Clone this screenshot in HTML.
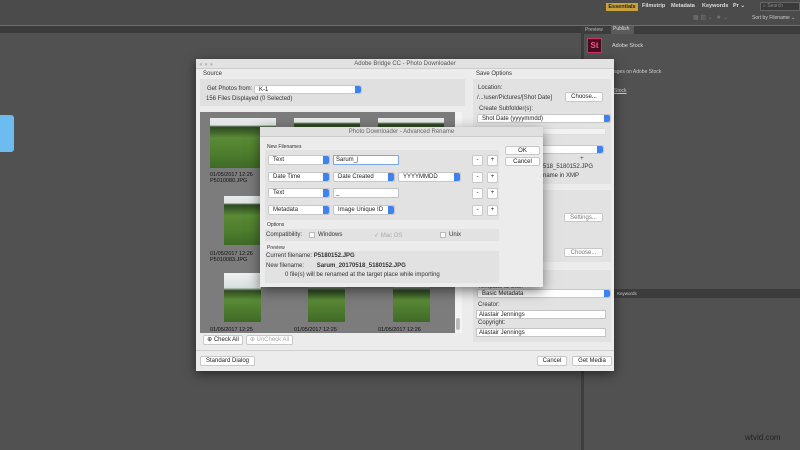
<!DOCTYPE html>
<html><head><meta charset="utf-8"><style>
*{margin:0;padding:0;box-sizing:border-box}
body{width:800px;height:450px;overflow:hidden;background:#515151;font-family:"Liberation Sans",sans-serif;font-size:6.5px;color:#222;position:relative}
.a{position:absolute;white-space:nowrap}
.btn{position:absolute;background:#fff;border:1px solid #c8c8c8;border-radius:2px;text-align:center;line-height:8px;font-size:6px}
.sel{position:absolute;background:#fff;border:1px solid #c8c8c8;border-radius:2px;line-height:8px;padding-left:4px;font-size:6px}
.sel:after{content:"";position:absolute;right:0;top:0;width:6px;height:100%;background:#3c82f0;border-radius:0 2px 2px 0}
.inp{position:absolute;background:#fff;border:1px solid #c4c4c4;line-height:8px;padding-left:2px;font-size:6px}
.ph{position:absolute;background:linear-gradient(#e8eceb 0%,#dfe5e4 14%,#2e4a22 18%,#3c5e28 26%,#5a8a36 40%,#4e7e2e 70%,#3f6a26 100%)}
.lbl{position:absolute;font-size:6px;color:#333}
</style></head><body>
<div class="a" style="left:0;top:0;width:800px;height:25px;background:#4b4b4b"></div>
<div class="a" style="left:0;top:25px;width:800px;height:1px;background:#6e6e6e"></div>
<div class="a" style="left:0;top:26px;width:583px;height:7px;background:#3b3b3b"></div>
<div class="a" style="left:606px;top:3px;width:32px;height:8px;background:#c9a23a;color:#222;font-size:5.5px;line-height:8px;text-align:center;font-weight:bold">Essentials</div>
<div class="a" style="left:642px;top:3px;color:#ddd;font-size:5.5px;font-weight:bold">Filmstrip</div>
<div class="a" style="left:671px;top:3px;color:#ddd;font-size:5.5px;font-weight:bold">Metadata</div>
<div class="a" style="left:702px;top:3px;color:#ddd;font-size:5.5px;font-weight:bold">Keywords</div>
<div class="a" style="left:733px;top:3px;color:#ddd;font-size:5.5px;font-weight:bold">Pr ⌄</div>
<div class="a" style="left:760px;top:2px;width:40px;height:9px;background:#3a3a3a;border:1px solid #666;color:#888;font-size:5px;line-height:7px;padding-left:2px">⌕ Search</div>
<div class="a" style="left:752px;top:15px;color:#ccc;font-size:5px">Sort by Filename ⌄</div>
<div class="a" style="left:693px;top:14px;color:#777;font-size:6px">▦ ▥ ⌄ &nbsp;★ ⌄</div>
<div class="a" style="left:581px;top:26px;width:3px;height:424px;background:#3e3e3e"></div>
<div class="a" style="left:584px;top:26px;width:216px;height:8px;background:#3c3c3c"></div>
<div class="a" style="left:585px;top:27px;color:#bbb;font-size:5px">Preview</div>
<div class="a" style="left:611px;top:26px;width:23px;height:8px;background:#5a5a5a;color:#ddd;font-size:5px;padding-left:2px">Publish</div>
<div class="a" style="left:587px;top:38px;width:15px;height:15px;background:#4a0c1c;border:1px solid #d0306a;color:#f05a8a;font-size:8px;font-weight:bold;text-align:center;line-height:13px">St</div>
<div class="a" style="left:612px;top:43px;color:#ddd;font-size:5.5px">Adobe Stock</div>
<div class="a" style="left:614px;top:69px;color:#ccc;font-size:5px">ages on Adobe Stock</div>
<div class="a" style="left:614px;top:88px;color:#ccc;font-size:5px;text-decoration:underline">Stock</div>
<div class="a" style="left:584px;top:289px;width:216px;height:9px;background:#3c3c3c"></div>
<div class="a" style="left:617px;top:291px;color:#ccc;font-size:4.5px">Keywords</div>
<div class="a" style="left:0;top:115px;width:14px;height:37px;background:#6cbcf0;border-radius:0 3px 3px 0"></div>
<div class="a" style="left:196px;top:59px;width:418px;height:312px;background:#ececec;box-shadow:0 3px 10px rgba(0,0,0,.5)"></div>
<div class="a" style="left:196px;top:59px;width:418px;height:10px;background:#e2e2e2;border-bottom:1px solid #ccc;text-align:center;font-size:6px;color:#555;line-height:10px">Adobe Bridge CC - Photo Downloader</div>
<div class="a" style="left:199px;top:62px;color:#bbb;font-size:6px">● ● ●</div>
<div class="lbl" style="left:203px;top:71px">Source</div>
<div class="a" style="left:200px;top:79px;width:265px;height:27px;background:#e0e0e0"></div>
<div class="lbl" style="left:207px;top:86px">Get Photos from:</div>
<div class="sel" style="left:254px;top:85px;width:108px;height:9px">K-1</div>
<div class="lbl" style="left:206px;top:96px">156 Files Displayed (0 Selected)</div>
<div class="a" style="left:200px;top:112px;width:260px;height:221px;background:#7c7c7c"></div>
<div class="a" style="left:455px;top:112px;width:7px;height:221px;background:#f4f4f4"></div>
<div class="a" style="left:456px;top:318px;width:4px;height:12px;background:#bbb;border-radius:2px"></div>
<div class="ph" style="left:210px;top:118px;width:66px;height:50px"></div>
<div class="ph" style="left:294px;top:118px;width:66px;height:10px;background:linear-gradient(#e8eceb 40%,#2e4a22 60%)"></div>
<div class="ph" style="left:378px;top:118px;width:66px;height:10px;background:linear-gradient(#e8eceb 40%,#2e4a22 60%)"></div>
<div class="a" style="left:210px;top:172px;font-size:5.5px;color:#111;line-height:6px">01/05/2017 12:26<br>P5010080.JPG</div>
<div class="ph" style="left:224px;top:196px;width:37px;height:49px"></div>
<div class="a" style="left:210px;top:251px;font-size:5.5px;color:#111;line-height:6px">01/05/2017 12:26<br>P5010083.JPG</div>
<div class="ph" style="left:224px;top:273px;width:37px;height:49px;background:linear-gradient(#f0f2f2 0%,#d8dede 30%,#2e4a22 36%,#5a8a36 55%,#3f6a26 100%)"></div>
<div class="ph" style="left:308px;top:273px;width:37px;height:49px;background:linear-gradient(#c8cccc 0%,#9aa0a0 28%,#2e4a22 36%,#5a8a36 55%,#3f6a26 100%)"></div>
<div class="ph" style="left:393px;top:273px;width:37px;height:49px;background:linear-gradient(#b8bcbc 0%,#a0a4a4 28%,#2e4a22 36%,#5a8a36 55%,#3f6a26 100%)"></div>
<div class="a" style="left:210px;top:327px;font-size:5.5px;color:#111">01/05/2017 12:25</div>
<div class="a" style="left:294px;top:327px;font-size:5.5px;color:#111">01/05/2017 12:25</div>
<div class="a" style="left:378px;top:327px;font-size:5.5px;color:#111">01/05/2017 12:26</div>
<div class="btn" style="left:203px;top:335px;width:40px;height:10px">⊕ Check All</div>
<div class="btn" style="left:246px;top:335px;width:47px;height:10px;color:#aaa">⊕ UnCheck All</div>
<div class="a" style="left:196px;top:350px;width:418px;height:1px;background:#d0d0d0"></div>
<div class="btn" style="left:200px;top:356px;width:55px;height:10px">Standard Dialog</div>
<div class="btn" style="left:537px;top:356px;width:30px;height:10px">Cancel</div>
<div class="btn" style="left:572px;top:356px;width:40px;height:10px">Get Media</div>
<div class="lbl" style="left:476px;top:71px">Save Options</div>
<div class="a" style="left:473px;top:79px;width:138px;height:105px;background:#e2e2e2"></div>
<div class="lbl" style="left:478px;top:85px">Location:</div>
<div class="lbl" style="left:477px;top:95px">/...\user/Pictures/[Shot Date]</div>
<div class="btn" style="left:565px;top:92px;width:38px;height:10px">Choose...</div>
<div class="lbl" style="left:479px;top:106px">Create Subfolder(s):</div>
<div class="sel" style="left:477px;top:114px;width:134px;height:9px">Shot Date (yyyymmdd)</div>
<div class="a" style="left:477px;top:128px;width:129px;height:7px;background:#f2f2f2;border:1px solid #ddd"></div>
<div class="sel" style="left:540px;top:145px;width:64px;height:9px"></div>
<div class="a" style="left:580px;top:155px;color:#444">+</div>
<div class="lbl" style="left:543px;top:164px">518_5180152.JPG</div>
<div class="lbl" style="left:543px;top:173px">name in XMP</div>
<div class="a" style="left:473px;top:190px;width:138px;height:72px;background:#e2e2e2"></div>
<div class="btn" style="left:564px;top:213px;width:39px;height:9px;color:#777">Settings...</div>
<div class="btn" style="left:564px;top:248px;width:39px;height:9px;color:#777">Choose...</div>
<div class="a" style="left:473px;top:270px;width:138px;height:72px;background:#e2e2e2"></div>
<div class="lbl" style="left:478px;top:284px">Template to Use:</div>
<div class="sel" style="left:477px;top:289px;width:134px;height:9px">Basic Metadata</div>
<div class="lbl" style="left:478px;top:302px">Creator:</div>
<div class="inp" style="left:476px;top:310px;width:130px;height:9px">Alastair Jennings</div>
<div class="lbl" style="left:478px;top:320px">Copyright:</div>
<div class="inp" style="left:476px;top:328px;width:130px;height:9px">Alastair Jennings</div>
<div class="a" style="left:260px;top:127px;width:283px;height:160px;background:#ececec;box-shadow:0 4px 12px rgba(0,0,0,.5)"></div>
<div class="a" style="left:260px;top:127px;width:283px;height:10px;background:#e0e0e0;border-bottom:1px solid #ccc;text-align:center;font-size:6px;color:#666;line-height:10px">Photo Downloader - Advanced Rename</div>
<div class="lbl" style="left:267px;top:144px;font-size:5px">New Filenames</div>
<div class="a" style="left:265px;top:150px;width:234px;height:70px;background:#e2e2e2"></div>
<div class="sel" style="left:268px;top:155px;width:62px;height:10px">Text</div>
<div class="inp" style="left:333px;top:155px;width:66px;height:10px;border-color:#7aa8e8">Sarum_|</div>
<div class="sel" style="left:268px;top:172px;width:62px;height:10px">Date Time</div>
<div class="sel" style="left:333px;top:172px;width:62px;height:10px">Date Created</div>
<div class="sel" style="left:398px;top:172px;width:63px;height:10px">YYYYMMDD</div>
<div class="sel" style="left:268px;top:188px;width:62px;height:10px">Text</div>
<div class="inp" style="left:333px;top:188px;width:66px;height:10px">_</div>
<div class="sel" style="left:268px;top:205px;width:62px;height:10px">Metadata</div>
<div class="sel" style="left:333px;top:205px;width:62px;height:10px">Image Unique ID</div>
<div class="btn" style="left:472px;top:155px;width:11px;height:11px">-</div><div class="btn" style="left:487px;top:155px;width:11px;height:11px">+</div>
<div class="btn" style="left:472px;top:172px;width:11px;height:11px">-</div><div class="btn" style="left:487px;top:172px;width:11px;height:11px">+</div>
<div class="btn" style="left:472px;top:188px;width:11px;height:11px">-</div><div class="btn" style="left:487px;top:188px;width:11px;height:11px">+</div>
<div class="btn" style="left:472px;top:205px;width:11px;height:11px">-</div><div class="btn" style="left:487px;top:205px;width:11px;height:11px">+</div>
<div class="btn" style="left:505px;top:146px;width:35px;height:9px">OK</div>
<div class="btn" style="left:505px;top:157px;width:35px;height:9px">Cancel</div>
<div class="lbl" style="left:267px;top:222px;font-size:5px">Options</div>
<div class="a" style="left:265px;top:229px;width:234px;height:12px;background:#e2e2e2"></div>
<div class="lbl" style="left:266px;top:232px">Compatibility:</div>
<div class="a" style="left:309px;top:232px;width:6px;height:6px;background:#fff;border:1px solid #bbb"></div>
<div class="lbl" style="left:318px;top:232px">Windows</div>
<div class="lbl" style="left:374px;top:232px;color:#aaa">✓ Mac OS</div>
<div class="a" style="left:440px;top:232px;width:6px;height:6px;background:#fff;border:1px solid #bbb"></div>
<div class="lbl" style="left:449px;top:232px">Unix</div>
<div class="lbl" style="left:267px;top:245px;font-size:5px">Preview</div>
<div class="a" style="left:265px;top:251px;width:234px;height:32px;background:#e2e2e2"></div>
<div class="lbl" style="left:266px;top:253px">Current filename: <b>P5180152.JPG</b></div>
<div class="lbl" style="left:266px;top:263px">New filename: <b style="margin-left:11px">Sarum_20170518_5180152.JPG</b></div>
<div class="lbl" style="left:285px;top:272px">0 file(s) will be renamed at the target place while importing</div>
<div class="a" style="left:745px;top:433px;color:#222;font-size:8px">wtvid.com</div>
</body></html>
